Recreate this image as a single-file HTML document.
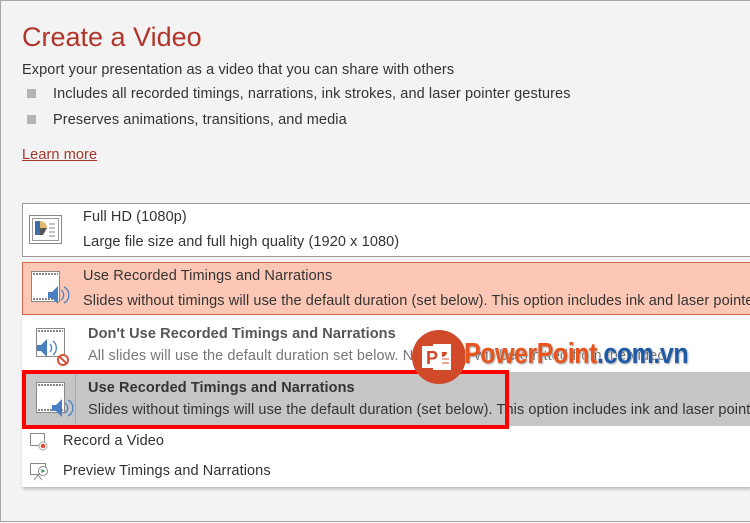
<!DOCTYPE html>
<html><head><meta charset="utf-8"><style>
*{margin:0;padding:0;box-sizing:border-box}
body{width:750px;height:523px;overflow:hidden;background:#f3f3f3;font-family:"Liberation Sans",sans-serif;color:#333;position:relative}
.frame{position:absolute;left:0;top:0;width:760px;height:522px;border:1px solid #a6a6a6}
.a{position:absolute;white-space:nowrap}
.t{font-size:14.5px;letter-spacing:0.1px}
.sq{position:absolute;width:9px;height:9px;background:#b4b4b4}
</style></head><body>
<div class="frame"></div>
<div class="a" style="left:22px;top:22px;font-size:27px;color:#b1352a">Create a Video</div>
<div class="a t" style="left:22px;top:62px">Export your presentation as a video that you can share with others</div>
<div class="sq" style="left:27px;top:89px"></div>
<div class="a t" style="left:53px;top:86px">Includes all recorded timings, narrations, ink strokes, and laser pointer gestures</div>
<div class="sq" style="left:27px;top:115px"></div>
<div class="a t" style="left:53px;top:112px">Preserves animations, transitions, and media</div>
<div class="a t" style="left:22px;top:147px;color:#a4372b;text-decoration:underline">Learn more</div>

<div class="a" style="left:22px;top:203px;width:740px;height:54px;background:#fff;border:1px solid #9a9a9a"></div>
<svg class="a" style="left:29px;top:215px" width="34" height="30"><rect x="0.5" y="0.5" width="32" height="28" fill="#fff" stroke="#888"/><rect x="3.5" y="3.5" width="26" height="22" fill="none" stroke="#999"/><path d="M6 6h5v14h-5z" fill="#3d6ca8"/><path d="M11 6a7 7 0 0 1 7 7h-7z" fill="#e0b870"/><path d="M11 13h7l-4 7h-3z" fill="#555"/><path d="M20 9h6M20 13h6M20 17h6M20 21h6" stroke="#888"/></svg>
<div class="a t" style="left:83px;top:209px">Full HD (1080p)</div>
<div class="a t" style="left:83px;top:234px">Large file size and full high quality (1920 x 1080)</div>

<div class="a" style="left:22px;top:262px;width:740px;height:53px;background:#fcc8b5;border:1px solid #d06a4c"></div>
<svg class="a" style="left:30px;top:270px" width="40" height="40"><rect x="1.5" y="1.5" width="28" height="30" fill="#fff" stroke="#888"/><path d="M3 4h25M3 29h25" stroke="#888" stroke-width="2" stroke-dasharray="2 1"/><path d="M18 22h4l6-6v18l-6-6h-4z" fill="#4a7fc1"/><path d="M31 20a6 6 0 0 1 0 10M34 17a9 9 0 0 1 0 16" stroke="#4a7fc1" fill="none" stroke-width="1.3"/></svg>
<div class="a t" style="left:83px;top:268px">Use Recorded Timings and Narrations</div>
<div class="a t" style="left:83px;top:293px">Slides without timings will use the default duration (set below). This option includes ink and laser pointer</div>

<div class="a" style="left:22px;top:315px;width:728px;height:172px;background:#fff;box-shadow:1px 2px 3px rgba(0,0,0,.25)"></div>
<svg class="a" style="left:34px;top:327px" width="40" height="40"><rect x="2.5" y="1.5" width="28" height="28" fill="#fff" stroke="#888"/><path d="M4 4h25" stroke="#888" stroke-width="2" stroke-dasharray="2 1"/><path d="M3 18h4l6-6v18l-6-6h-4z" fill="#4a7fc1"/><path d="M16 17a6 6 0 0 1 0 8M19 14a9 9 0 0 1 0 14" stroke="#4a7fc1" fill="none" stroke-width="1.3"/><circle cx="29" cy="33" r="5" fill="#fff" stroke="#d9543a" stroke-width="2"/><path d="M25.5 29.5l7 7" stroke="#d9543a" stroke-width="2"/></svg>
<div class="a t" style="left:88px;top:326px;font-weight:bold;color:#555">Don't Use Recorded Timings and Narrations</div>
<div class="a t" style="left:88px;top:348px;color:#777">All slides will use the default duration set below. Narrations will be omitted from the video.</div>

<div class="a" style="left:22px;top:372px;width:728px;height:54px;background:#c6c6c6"></div>
<div class="a" style="left:75px;top:372px;width:1px;height:54px;background:#aaa"></div>
<svg class="a" style="left:34px;top:381px" width="40" height="40"><rect x="2.5" y="1.5" width="28" height="30" fill="#fff" stroke="#888"/><path d="M4 4h25M4 29h25" stroke="#888" stroke-width="2" stroke-dasharray="2 1"/><path d="M18 24h4l6-6v18l-6-6h-4z" fill="#4a7fc1"/><path d="M31 22a6 6 0 0 1 0 10M34 19a9 9 0 0 1 0 16" stroke="#4a7fc1" fill="none" stroke-width="1.3"/></svg>
<div class="a t" style="left:88px;top:380px;font-weight:bold">Use Recorded Timings and Narrations</div>
<div class="a t" style="left:88px;top:402px">Slides without timings will use the default duration (set below). This option includes ink and laser pointer</div>
<div class="a" style="left:22px;top:370px;width:487px;height:59px;border:4px solid #f00"></div>

<svg class="a" style="left:29px;top:432px" width="20" height="20"><rect x="1.5" y="1.5" width="14" height="12" fill="#fff" stroke="#888"/><circle cx="14" cy="14" r="4" fill="#fff" stroke="#aaa"/><circle cx="14" cy="14" r="2.3" fill="#e04a3a"/></svg>
<div class="a t" style="left:63px;top:433px">Record a Video</div>
<svg class="a" style="left:29px;top:462px" width="20" height="20"><rect x="1.5" y="1.5" width="15" height="11" fill="#fff" stroke="#888"/><path d="M5 18l4-5 4 5" stroke="#888" fill="none"/><circle cx="14" cy="9" r="4.5" fill="#fff" stroke="#888"/><path d="M12.5 7l4 2-4 2z" fill="#3a9a5a"/></svg>
<div class="a t" style="left:63px;top:463px">Preview Timings and Narrations</div>

<svg class="a" style="left:408px;top:328px" width="60" height="60"><circle cx="31" cy="29" r="27" fill="#d04a29"/><rect x="25" y="16" width="18" height="26" fill="#fff"/><path d="M34 19a5 5 0 1 0 5 5h-5z" fill="#d04a29"/><path d="M34 31h7M34 35h7" stroke="#d04a29"/><rect x="14" y="18" width="20" height="22" fill="#fff"/><text x="18" y="36" font-family="Liberation Sans" font-weight="bold" font-size="18" fill="#d04a29">P</text></svg>
<div class="a" style="left:464px;top:338px;font-size:29px;font-weight:bold;letter-spacing:-0.5px;color:#e8541e;-webkit-text-stroke:1px #fff;paint-order:stroke fill;text-shadow:1px 1px 2px rgba(0,0,0,.4);transform:scaleX(0.86);transform-origin:left top">PowerPoint<span style="color:#1f5aa6">.com.vn</span></div>
</body></html>
